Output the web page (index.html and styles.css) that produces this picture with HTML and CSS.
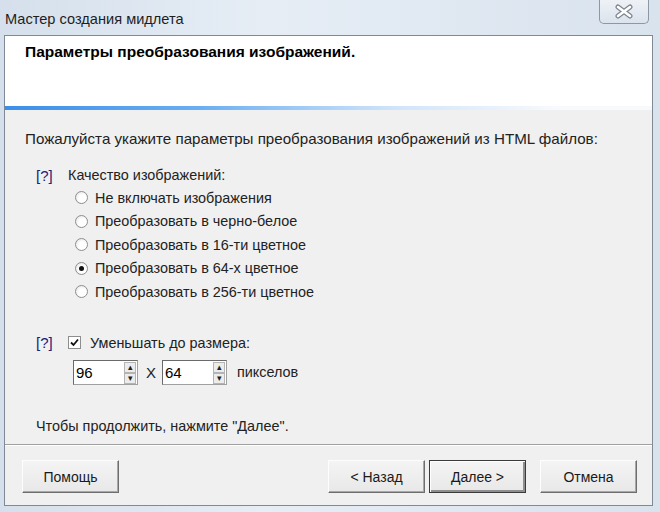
FILE: index.html
```html
<!DOCTYPE html>
<html>
<head>
<meta charset="utf-8">
<link rel="stylesheet" href="styles.css">
</head>
<body>
<div class="window">
  <div class="titlebar">
    <span class="title">Мастер создания мидлета</span>
    <div class="close">
      <svg width="20" height="15" viewBox="0 0 20 15"><path d="M4 3 L16 12 M16 3 L4 12" stroke="#7d848d" stroke-width="5" stroke-linecap="round"/><path d="M4 3 L16 12 M16 3 L4 12" stroke="#ffffff" stroke-width="2.6" stroke-linecap="round"/></svg>
    </div>
  </div>
  <div class="client">
    <div class="header">
      <div class="header-title">Параметры преобразования изображений.</div>
    </div>
    <div class="rule"></div>
    <div class="body">
      <p class="intro">Пожалуйста укажите параметры преобразования изображений из HTML файлов:</p>
      <div class="group">
        <div class="grow"><span class="help">[?]</span><span>Качество изображений:</span></div>
        <div class="radios">
          <div class="radio-row"><span class="radio"></span>Не включать изображения</div>
          <div class="radio-row"><span class="radio"></span>Преобразовать в черно-белое</div>
          <div class="radio-row"><span class="radio"></span>Преобразовать в 16-ти цветное</div>
          <div class="radio-row"><span class="radio checked"></span>Преобразовать в 64-х цветное</div>
          <div class="radio-row"><span class="radio"></span>Преобразовать в 256-ти цветное</div>
        </div>
      </div>
      <div class="group2">
        <div class="grow"><span class="help">[?]</span><span class="check"><svg width="9" height="9" viewBox="0 0 9 9"><path d="M1 4.5 L3.5 7 L8 1.5" stroke="#111" stroke-width="1.8" fill="none"/></svg></span><span>Уменьшать до размера:</span></div>
        <div class="size-row">
          <div class="spin"><span class="val">96</span><span class="arrows"><span class="up">▴</span><span class="down">▾</span></span></div>
          <span class="x">X</span>
          <div class="spin"><span class="val">64</span><span class="arrows"><span class="up">▴</span><span class="down">▾</span></span></div>
          <span class="units">пикселов</span>
        </div>
      </div>
      <p class="cont">Чтобы продолжить, нажмите "Далее".</p>
    </div>
    <div class="sep"></div>
    <div class="buttons">
      <button class="btn">Помощь</button>
      <div class="spacer"></div>
      <button class="btn">&lt; Назад</button>
      <button class="btn default">Далее &gt;</button>
      <button class="btn cancel">Отмена</button>
    </div>
  </div>
</div>
</body>
</html>
```
FILE: styles.css
```css
* { box-sizing: border-box; }
html, body { margin: 0; padding: 0; }
body { width: 660px; height: 512px; overflow: hidden; font-family: "Liberation Sans", Arial, sans-serif; }
.window {
  width: 660px; height: 512px;
  background: linear-gradient(to right, #d5e0ec, #e6edf5 40%, #d9e3ee);
  display: flex; flex-direction: column;
  padding: 0 7px 6px 4px;
}
.titlebar {
  height: 35px; display: flex; align-items: flex-start;
}
.title {
  font-size: 14.6px; color: #1e1e1e; margin-top: 11px; margin-left: 1px;
}
.close {
  margin-left: auto; margin-right: 4px;
  width: 50px; height: 24px;
  border: 1px solid #8d98a5; border-top: none;
  border-radius: 0 0 5px 5px;
  background: linear-gradient(#eef2f7, #dbe3ec);
  display: flex; align-items: center; justify-content: center;
}
.client {
  flex: 1; background: #f0f0f0;
  border: 1px solid #7f8a96;
  display: flex; flex-direction: column;
}
.header {
  height: 70px; background: #ffffff; padding: 7px 0 0 20px;
}
.header-title { font-size: 15.5px; font-weight: bold; color: #000; }
.rule {
  height: 4px;
  background: linear-gradient(to right, #3c8ee8, #6aaef2 30%, #cfe4fa 60%, #f7f9fc 85%);
}
.body { flex: 1; padding: 19px 0 0 20px; font-size: 14.4px; color: #222; }
.intro { margin: 0; line-height: 20px; font-size: 15.15px; }
.group { margin-top: 17px; }
.grow { display: flex; align-items: center; height: 18px; }
.help { color: #20207a; margin-left: 11px; width: 32px; font-size: 15px; }
.radios { margin-left: 50px; margin-top: 2px; }
.radio-row { display: flex; align-items: center; height: 23.5px; }
.radio {
  width: 13px; height: 13px; border-radius: 50%;
  border: 1px solid #8e8e8e;
  background: radial-gradient(circle at 60% 60%, #ffffff 40%, #dcdcdc 100%);
  margin-right: 7px; position: relative;
}
.radio.checked::after {
  content: ""; position: absolute; left: 3px; top: 3px;
  width: 5px; height: 5px; border-radius: 50%; background: #111;
}
.group2 { margin-top: 30px; }
.check {
  width: 13px; height: 13px; border: 1px solid #8e8e8e; background: #fff;
  display: flex; align-items: center; justify-content: center; margin-right: 9px;
}
.size-row { display: flex; align-items: center; margin-left: 48px; margin-top: 8px; height: 25px; }
.spin {
  width: 65px; height: 25px;
  border: 1px solid #a0a0a0; border-top-color: #6a6a6a; border-left-color: #6a6a6a;
  background: #fff; display: flex; align-items: center; justify-content: space-between;
}
.val { padding-left: 2px; color: #000; font-size: 15px; }
.arrows { width: 12px; height: 21px; display: flex; flex-direction: column; margin-right: 1px; }
.arrows span {
  flex: 1; font-size: 9px; line-height: 9px; text-align: center; color: #222;
  background: #ececec; border: 1px solid #b4b4b4;
}
.x { width: 24px; text-align: right; padding-right: 6px; font-size: 15px; }
.units { margin-left: 10px; }
.cont { margin: 31px 0 0 11px; line-height: 20px; }
.sep { background: #a0a0a0; border-bottom: 1px solid #fff; height: 2px; margin-bottom: 14px; }
.buttons { display: flex; padding: 0 15px 12px 17px; gap: 4px; }
.spacer { flex: 1; }
.btn {
  width: 97px; height: 33px; font-family: "Liberation Sans", Arial, sans-serif; font-size: 14px; color: #1a1a1a;
  background: linear-gradient(#f4f4f4, #e8e8e8);
  border: 1px solid; border-color: #fdfdfd #6e6e6e #6e6e6e #fdfdfd;
  box-shadow: inset -1px -1px 0 #a8a8a8;
}
.btn.default { border: 1px solid #3a3a3a; box-shadow: inset 1px 1px 0 #fff, inset -2px -2px 0 #8e8e8e; }
.btn.cancel { margin-left: 10px; }
```
